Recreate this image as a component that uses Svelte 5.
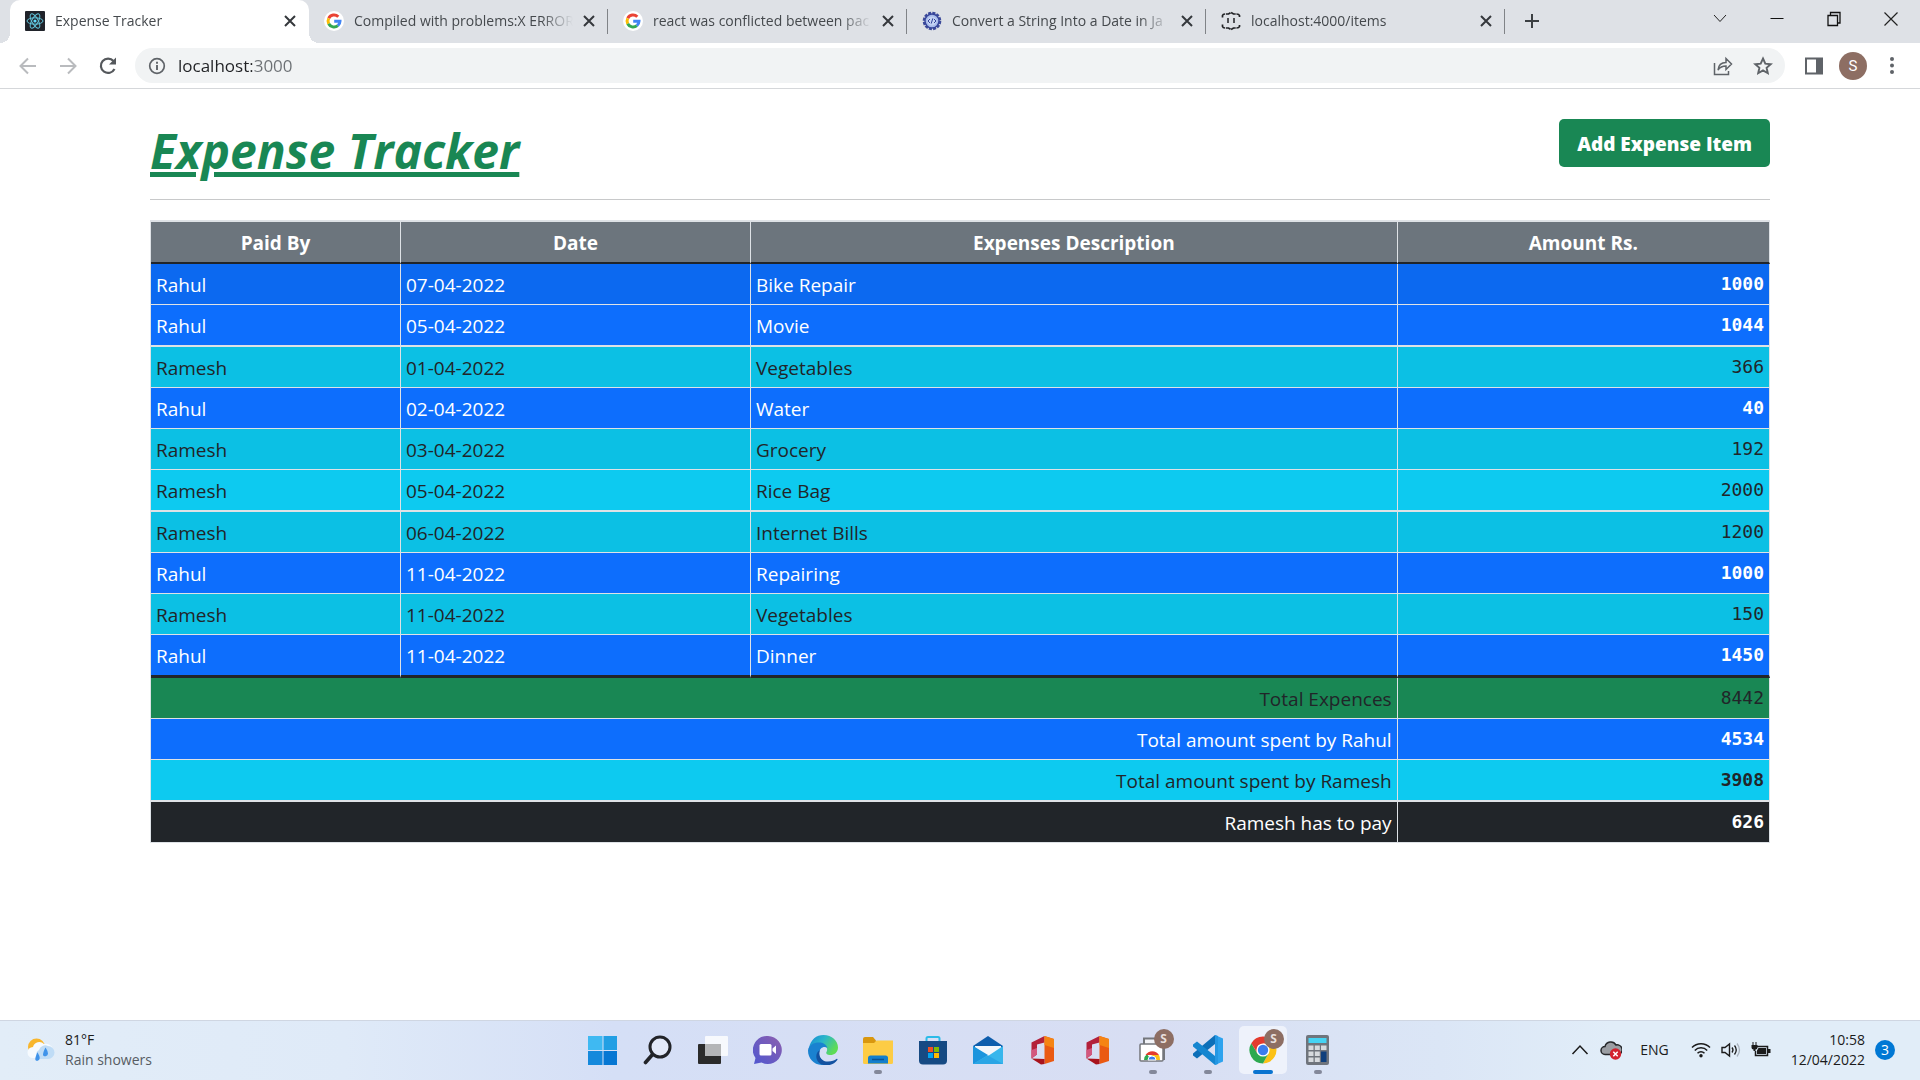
<script>
  const tabs = [
    { title: 'Expense Tracker', icon: 'react', active: true },
    { title: 'Compiled with problems:X ERROR', icon: 'google' },
    { title: 'react was conflicted between pac', icon: 'google' },
    { title: 'Convert a String Into a Date in Ja', icon: 'badge' },
    { title: 'localhost:4000/items', icon: 'json' }
  ];

  const expenses = [
    { payer: 'Rahul', date: '07-04-2022', description: 'Bike Repair', amount: 1000, shaded: true },
    { payer: 'Rahul', date: '05-04-2022', description: 'Movie', amount: 1044, thick: true },
    { payer: 'Ramesh', date: '01-04-2022', description: 'Vegetables', amount: 366, shaded: true },
    { payer: 'Rahul', date: '02-04-2022', description: 'Water', amount: 40 },
    { payer: 'Ramesh', date: '03-04-2022', description: 'Grocery', amount: 192, shaded: true },
    { payer: 'Ramesh', date: '05-04-2022', description: 'Rice Bag', amount: 2000, thick: true },
    { payer: 'Ramesh', date: '06-04-2022', description: 'Internet Bills', amount: 1200, shaded: true },
    { payer: 'Rahul', date: '11-04-2022', description: 'Repairing', amount: 1000 },
    { payer: 'Ramesh', date: '11-04-2022', description: 'Vegetables', amount: 150, shaded: true },
    { payer: 'Rahul', date: '11-04-2022', description: 'Dinner', amount: 1450 }
  ];

  const totals = [
    { label: 'Total Expences', amount: 8442, kind: 'success' },
    { label: 'Total amount spent by Rahul', amount: 4534, kind: 'primary', bold: true },
    { label: 'Total amount spent by Ramesh', amount: 3908, kind: 'info', bold: true, thick: true },
    { label: 'Ramesh has to pay', amount: 626, kind: 'dark', bold: true }
  ];

  const apps = [
    { name: 'Start', icon: 'start' },
    { name: 'Search', icon: 'search' },
    { name: 'Task View', icon: 'taskview' },
    { name: 'Chat', icon: 'chat' },
    { name: 'Microsoft Edge', icon: 'edge' },
    { name: 'File Explorer', icon: 'folder', running: true },
    { name: 'Microsoft Store', icon: 'store' },
    { name: 'Mail', icon: 'mail' },
    { name: 'Office', icon: 'office' },
    { name: 'Office', icon: 'office' },
    { name: 'Chrome Web Store', icon: 'webstore', running: true, profile: true },
    { name: 'Visual Studio Code', icon: 'vscode', running: true },
    { name: 'Google Chrome', icon: 'chrome', active: true, profile: true },
    { name: 'Calculator', icon: 'calc', running: true }
  ];

  let address = $state('localhost:3000');
</script>

{#snippet chromeLogo()}
  <path d="M15 8.500H26.800A13.500 13.500 0 0 1 15 28.500L20.600 18.300Z" fill="#fbc116" />
  <path d="M3.300 8.200 9.400 18.300 20.600 18.300 15 28.500A13.500 13.500 0 0 1 3.300 8.200Z" fill="#2da94f" />
  <path d="M3.300 8.200A13.500 13.500 0 0 1 26.800 8.500H15L9.400 18.300Z" fill="#e33b2e" />
  <circle cx="15" cy="15" r="6.600" fill="#fff" />
  <circle cx="15" cy="15" r="5.200" fill="#3b7ded" />
{/snippet}

{#snippet favicon(kind)}
  {#if kind === 'react'}
    <svg class="favicon" viewBox="0 0 20 20" aria-hidden="true">
      <rect width="20" height="20" rx="1" fill="#20232a" />
      <g fill="none" stroke="#61c5dc" stroke-width="1">
        <ellipse cx="10" cy="10" rx="8" ry="3.200" />
        <ellipse cx="10" cy="10" rx="8" ry="3.200" transform="rotate(60 10 10)" />
        <ellipse cx="10" cy="10" rx="8" ry="3.200" transform="rotate(120 10 10)" />
      </g>
      <circle cx="10" cy="10" r="1.600" fill="#61dafb" />
    </svg>
  {:else if kind === 'google'}
    <svg class="favicon" viewBox="0 0 20 20" aria-hidden="true">
      <circle cx="10" cy="10" r="10" fill="#fff" />
      <g fill="none" stroke-width="3">
        <path d="M14.300 5.800A6 6 0 0 0 4.700 7.300" stroke="#ea4335" />
        <path d="M4.700 7.300A6 6 0 0 0 4.700 12.700" stroke="#fbbc05" />
        <path d="M4.700 12.700A6 6 0 0 0 13.900 14.600" stroke="#34a853" />
        <path d="M13.900 14.600A6 6 0 0 0 16 10.200H10.200" stroke="#4285f4" />
      </g>
    </svg>
  {:else if kind === 'badge'}
    <svg class="favicon" viewBox="0 0 20 20" aria-hidden="true">
      <circle cx="10" cy="10" r="8" fill="none" stroke="#3c4a9a" stroke-width="2.600" stroke-dasharray="3 1.200" />
      <circle cx="10" cy="10" r="7" fill="#a8bbea" stroke="#35449a" stroke-width="1.400" />
      <circle cx="10" cy="10" r="4.600" fill="#c3d2f3" />
      <path d="M8 8 6 10l2 2M12 8l2 2-2 2M10.800 7.400 9.200 12.600" fill="none" stroke="#35449a" />
    </svg>
  {:else}
    <svg class="favicon" viewBox="0 0 20 20" aria-hidden="true">
      <path
        d="M1.500 6.500V4.500Q2 3 4.500 3H7.500L10 1.500 12.500 3H15.500Q18 3 18.500 4.500V6.500M1.500 13.500V15.500Q2 17 4.500 17H7.500L10 18.500 12.500 17H15.500Q18 17 18.500 15.500V13.500"
        fill="none" stroke="#202124" stroke-width="1.700" stroke-dasharray="5 0.700" />
      <path d="M7 7v5M13 7v5" stroke="#202124" stroke-width="1.500" />
    </svg>
  {/if}
{/snippet}

{#snippet appIcon(kind)}
  <svg class="app-icon" viewBox="0 0 30 30" aria-hidden="true">
    {#if kind === 'start'}
      <path d="M0 1h14.500v14H0z" fill="#3fb9f2" />
      <path d="M15.500 1H29v14H15.500z" fill="#229fe4" />
      <path d="M0 16h14.500v14H0z" fill="#1589dc" />
      <path d="M15.500 16H29v14H15.500z" fill="#0677d3" />
    {:else if kind === 'search'}
      <circle cx="17" cy="12" r="10" fill="#e3e9f8" stroke="#222428" stroke-width="3" />
      <path d="M9.500 19.500 2.500 27.500" stroke="#222428" stroke-width="3.600" stroke-linecap="round" />
    {:else if kind === 'taskview'}
      <rect x="0" y="9" width="23" height="20" rx="1" fill="#2b2b2b" />
      <rect x="7" y="1" width="23" height="20" rx="1" fill="#fff" opacity="0.800" />
      <path d="M7 9h16v12H7z" fill="#b4b5b7" />
    {:else if kind === 'chat'}
      <path d="M15 1a14 14 0 1 1-6.500 26.500L1 29l1.500-6A14 14 0 0 1 15 1Z" fill="url(#chatFill)" />
      <rect x="6.500" y="9" width="12" height="11.500" rx="1.500" fill="#fff" />
      <path d="m19.500 13.500 3.500-3v8.500l-3.500-3z" fill="#fff" />
    {:else if kind === 'edge'}
      <path d="M1 13C2.500 4.500 8.500 0 15.500 0 24 0 30 6 30 12.500c0 5-4 7.500-7.500 7.500-3.500 0-5-1.500-4-3 2-3.500-.5-7-5-7C7.500 10 2 11 1 18Z" fill="url(#edgeTop)" />
      <path d="M0 15.500C.500 10 6 7.500 11 7.500c4 0 7.500 2 8.500 5.500-2-1.500-4.500-1.500-6.500.5-3 3-2.500 9.500 2 13 2 1.800 4.500 2.500 6 2.300C10 33 0 26 0 15.500Z" fill="#1a82d0" />
      <path d="M12 15c-2 5 .500 11.500 8 11.500 4 0 6.500-1 8.500-2.500.8-.5 1.300.2.800 1C26.500 29 22 31 16 30 8 28.500 5.500 19 12 15Z" fill="#1352a1" />
    {:else if kind === 'folder'}
      <path d="M0 4q0-2 2-2h8l3 3.500V9H0z" fill="#d9970f" />
      <path d="M0 8h11l2.500-2.500H30v22q0 1.500-1.500 1.500h-27Q0 29 0 27.500z" fill="#fdcc45" />
      <path d="M5 28.500V23q0-2.500 2.500-2.500h15Q25 20.500 25 23v5.500z" fill="#137fcd" />
      <path d="M9 24.500h12" stroke="#0b5292" stroke-width="1.500" />
    {:else if kind === 'store'}
      <path d="M8.500 7V3.500q0-1.500 1.500-1.500h10q1.500 0 1.500 1.500V7" fill="none" stroke="#2bbbe8" stroke-width="2" />
      <path d="M1 6h28v19.500q0 4-4 4H5q-4 0-4-4z" fill="#164a83" />
      <path d="M10 12h5v5h-5z" fill="#f25022" /><path d="M16 12h5v5h-5z" fill="#7fba00" />
      <path d="M10 18h5v5h-5z" fill="#00a4ef" /><path d="M16 18h5v5h-5z" fill="#ffb900" />
    {:else if kind === 'mail'}
      <path d="M0 11 15 1l15 10v6H0z" fill="#0e5dac" />
      <path d="M2 11h26v9H2z" fill="#f3f6fb" />
      <path d="M0 11 15 21 30 11v18H0z" fill="#38b6ec" />
      <path d="M0 29 15 20 0 11z" fill="#1c94dd" /><path d="m15 20.500 15 8.500H0z" fill="#2aa5e5" />
    {:else if kind === 'office'}
      <path d="M3.500 7.500 16.500 1v6.500L9 9.500v10l-5.500 4z" fill="#b3203a" />
      <path d="m16.500 1 9.500 3v22l-9.500 3z" fill="#ea5a12" />
      <path d="m16.500 1 9.500 3v9l-9.500-3z" fill="#f58413" />
      <path d="m3.500 23.500 13 .5V29L13 29.500z" fill="#a8131c" />
      <path d="m3.500 23.500 5.500-4V13l-5.500 2z" fill="#d3577e" />
    {:else if kind === 'webstore'}
      <path d="M6 9V3.500h20V24h-3" fill="#f2f3f7" stroke="#74777c" stroke-width="2" />
      <rect x="2" y="9" width="23" height="17" rx="1" fill="#fff" stroke="#74777c" stroke-width="1.500" />
      <path d="M6 25a8 8 0 0 1 3-6l4 6z" fill="#2da94f" />
      <path d="M7.500 20a8 8 0 0 1 13.500 0h-8z" fill="#e33b2e" />
      <path d="M13.500 20h7.500q1 2 1 5h-7z" fill="#fbc116" />
      <path d="M10 25a4 4 0 0 1 8 0z" fill="#3b7ded" stroke="#fff" />
    {:else if kind === 'vscode'}
      <path d="m22 0 8 3.500v23L22 30z" fill="#2ea3ee" />
      <path d="M22 0v9L4 23.500 0 20.500v-2z" fill="#0d6fb8" />
      <path d="M22 30v-9L4 6.500 0 9.500v2z" fill="#1586d0" />
      <path d="m22 0 3 1v28l-3 1z" fill="#2497e3" />
    {:else if kind === 'chrome'}
      {@render chromeLogo()}
    {:else}
      <rect x="3" y="0" width="23" height="30" rx="2" fill="#6f747c" />
      <rect x="5.500" y="3" width="18" height="5" fill="#46d3f3" />
      <path d="M5.500 10.500h5v4.500h-5zM11.800 10.500h5v4.500h-5zM18 10.500h5.500v4.500H18zM5.500 16.500h5V21h-5zM11.800 16.500h5V21h-5zM5.500 22.500h5V27h-5zM11.800 22.500h5V27h-5z" fill="#d7dade" />
      <path d="M18 16.500h5.500V27H18z" fill="#103f7c" />
    {/if}
  </svg>
{/snippet}

<svg class="defs" aria-hidden="true">
  <defs>
    <linearGradient id="chatFill" x1="1" y1="0" x2="0" y2="1">
      <stop offset="0" stop-color="#8d5fae" /><stop offset="1" stop-color="#4f57d0" />
    </linearGradient>
    <linearGradient id="edgeTop" x1="0" y1="0" x2="1" y2="0.500">
      <stop offset="0" stop-color="#1487d8" /><stop offset="0.500" stop-color="#2bb6c9" /><stop offset="1" stop-color="#5fdc55" />
    </linearGradient>
  </defs>
</svg>

<div class="screen">
  <header class="browser">
    <div class="tab-strip">
      <nav class="tabs" aria-label="Tabs">
        {#each tabs as tab}
          <div class="tab" class:active={tab.active}>
            {@render favicon(tab.icon)}
            <span class="tab-title">{tab.title}</span>
            <button class="icon-button" aria-label="Close tab">
              <svg width="12" height="12" viewBox="0 0 12 12"><path d="m1 1 10 10M11 1 1 11" stroke="#35383c" stroke-width="2" /></svg>
            </button>
          </div>
        {/each}
        <button class="icon-button new-tab" aria-label="New tab">
          <svg width="16" height="16" viewBox="0 0 16 16"><path d="M8 1v14M1 8h14" stroke="#3c4043" stroke-width="2" /></svg>
        </button>
      </nav>
      <div class="window-controls">
        <button class="icon-button" aria-label="Search tabs">
          <svg width="16" height="16" viewBox="0 0 16 16"><path d="m2 4 6 6.500L14 4" fill="none" stroke="#222" /></svg>
        </button>
        <button class="icon-button" aria-label="Minimize">
          <svg width="16" height="16" viewBox="0 0 16 16"><path d="M1.500 7.500h13" stroke="#111" /></svg>
        </button>
        <button class="icon-button" aria-label="Restore">
          <svg width="16" height="16" viewBox="0 0 16 16"><path d="M2 4.500h9.500v10H2zM4.500 4V1.500H14V12h-2" fill="none" stroke="#111" stroke-width="1.300" /></svg>
        </button>
        <button class="icon-button" aria-label="Close">
          <svg width="16" height="16" viewBox="0 0 16 16"><path d="m1.500 1.500 13 13M14.500 1.500l-13 13" stroke="#222" stroke-width="1.200" /></svg>
        </button>
      </div>
    </div>

    <div class="toolbar">
      <button class="icon-button nav-button" aria-label="Back">
        <svg width="20" height="20" viewBox="0 0 20 20"><path d="M18 10H3M10 2.500 2.500 10l7.500 7.500" fill="none" stroke="#b9bbbe" stroke-width="2" /></svg>
      </button>
      <button class="icon-button nav-button" aria-label="Forward">
        <svg width="20" height="20" viewBox="0 0 20 20"><path d="M2 10h15M10 2.500l7.500 7.500-7.500 7.500" fill="none" stroke="#b9bbbe" stroke-width="2" /></svg>
      </button>
      <button class="icon-button nav-button" aria-label="Reload">
        <svg width="20" height="20" viewBox="0 0 20 20"><path d="M16.500 13A7.200 7.200 0 1 1 15.500 5" fill="none" stroke="#55585c" stroke-width="2.200" /><path d="M18 1.500V8.500H11z" fill="#55585c" /></svg>
      </button>
      <div class="omnibox">
        <svg width="18" height="18" viewBox="0 0 18 18" aria-hidden="true">
          <circle cx="9" cy="9" r="7.300" fill="none" stroke="#5f6368" stroke-width="1.700" />
          <path d="M9 8v5M9 4.800v1.900" stroke="#5f6368" stroke-width="1.900" />
        </svg>
        <input class="address" type="text" aria-label="Address" bind:value={address} />
        <button class="icon-button" aria-label="Share">
          <svg width="20" height="20" viewBox="0 0 20 20"><path d="M1.500 7v11.500h14V15" fill="none" stroke="#5f6368" stroke-width="1.500" /><path d="M5 14c.5-5 3-7.500 8-7.500V2.500l5.500 5.500-5.500 5.500V10C9 10 7 11 5 14Z" fill="none" stroke="#5f6368" stroke-width="1.500" /></svg>
        </button>
        <button class="icon-button" aria-label="Bookmark">
          <svg width="20" height="20" viewBox="0 0 20 20"><path d="m10 2.500 2.300 5.200 5.400.500-4.100 3.600 1.200 5.400L10 14.400l-4.800 2.800 1.200-5.400-4.100-3.600 5.400-.500z" fill="none" stroke="#5f6368" stroke-width="1.900" /></svg>
        </button>
      </div>
      <div class="toolbar-end">
        <button class="icon-button" aria-label="Side panel">
          <svg width="18" height="18" viewBox="0 0 18 18"><path d="M1 1.500h16v15H1z" fill="#fff" stroke="#5f6368" stroke-width="2" /><path d="M11 1h6v16h-6z" fill="#5f6368" /></svg>
        </button>
        <button class="avatar" aria-label="Profile">S</button>
        <button class="icon-button" aria-label="Menu">
          <svg width="18" height="18" viewBox="0 0 18 18"><g fill="#5f6368"><circle cx="9" cy="2" r="2" /><circle cx="9" cy="8.500" r="2" /><circle cx="9" cy="15" r="2" /></g></svg>
        </button>
      </div>
    </div>
  </header>

  <main class="page">
    <div class="page-head">
      <h1>Expense Tracker</h1>
      <button class="add">Add Expense Item</button>
    </div>
    <hr />
    <table>
      <colgroup>
        <col class="col-payer" /><col class="col-date" /><col class="col-description" /><col class="col-amount" />
      </colgroup>
      <thead>
        <tr>
          <th scope="col">Paid By</th>
          <th scope="col">Date</th>
          <th scope="col">Expenses Description</th>
          <th scope="col">Amount Rs.</th>
        </tr>
      </thead>
      <tbody>
        {#each expenses as item}
          <tr class={item.payer === 'Rahul' ? 'primary' : 'info'} class:shaded={item.shaded} class:thick={item.thick}>
            <td>{item.payer}</td>
            <td>{item.date}</td>
            <td>{item.description}</td>
            <td class="amount" class:bold={item.payer === 'Rahul'}>{item.amount}</td>
          </tr>
        {/each}
      </tbody>
      <tfoot>
        {#each totals as total}
          <tr class={total.kind} class:thick={total.thick}>
            <td class="label" colspan="3">{total.label}</td>
            <td class="amount" class:bold={total.bold}>{total.amount}</td>
          </tr>
        {/each}
      </tfoot>
    </table>
  </main>

  <footer class="taskbar">
    <button class="weather">
      <svg width="28" height="26" viewBox="0 0 28 26" aria-hidden="true">
        <circle cx="9.500" cy="10" r="8.500" fill="#f8b62d" />
        <path d="M6 21a5.500 5.500 0 0 1 0-11 6.500 6.500 0 0 1 11-3 7 7 0 0 1 4 14z" fill="#f6fafe" />
        <path d="M12 22a5 5 0 0 1 0-9 6.500 6.500 0 0 1 9-4 6.500 6.500 0 0 1 0 13z" fill="#bfdcf6" />
        <path d="M10.500 17q3 5 0 6t0-6ZM18.500 12q3.500 5.500 0 6.500t0-6.500Z" fill="#3f93ea" stroke="#3f93ea" stroke-width="1.500" />
      </svg>
      <span class="weather-text"><span class="temp">81°F</span><span class="sky">Rain showers</span></span>
    </button>

    <nav class="apps" aria-label="Taskbar apps">
      {#each apps as app}
        <button class="app" class:active={app.active} class:running={app.running} aria-label={app.name}>
          {@render appIcon(app.icon)}
          {#if app.profile}<span class="profile">S</span>{/if}
        </button>
      {/each}
    </nav>

    <div class="tray">
      <button class="icon-button chevron" aria-label="Hidden icons">
        <svg width="18" height="12" viewBox="0 0 18 12"><path d="m1.500 10 7.500-8 7.500 8" fill="none" stroke="#1b1b1b" stroke-width="1.500" /></svg>
      </button>
      <svg width="22" height="20" viewBox="0 0 22 20" aria-hidden="true">
        <path d="M5 14.500a4 4 0 0 1 0-8 6 6 0 0 1 11-1.500 5 5 0 0 1 3 9.500z" fill="#9a9da2" stroke="#25272a" stroke-width="1.500" />
        <circle cx="15.500" cy="14" r="5.700" fill="#d3222e" />
        <path d="m13.300 11.800 4.400 4.400M17.700 11.800l-4.400 4.400" stroke="#fff" stroke-width="1.500" />
      </svg>
      <span class="language">ENG</span>
      <button class="quick" aria-label="Network, volume and battery">
        <svg width="20" height="16" viewBox="0 0 20 16"><g fill="none" stroke="#1b1b1b" stroke-width="1.500"><path d="M1 5.500a12.500 12.500 0 0 1 18 0" /><path d="M3.800 8.500a8.500 8.500 0 0 1 12.400 0" /><path d="M6.500 11.300a5 5 0 0 1 7 0" /></g><circle cx="10" cy="13.800" r="1.700" fill="#1b1b1b" /></svg>
        <svg width="20" height="16" viewBox="0 0 20 16"><path d="M1 5.500h3L8.500 2v12L4 10.500H1z" fill="none" stroke="#1b1b1b" stroke-width="1.400" /><path d="M11 5.500q2 2.500 0 5M13.500 3.500q3.500 4.500 0 9" fill="none" stroke="#1b1b1b" stroke-width="1.300" /><path d="M16 1.500q5 6.500 0 13" fill="none" stroke="#a9b2bd" stroke-width="1.300" /></svg>
        <svg width="20" height="16" viewBox="0 0 20 16"><path d="M6 4.500h10.500v9H4.500V9" fill="none" stroke="#1b1b1b" stroke-width="1.500" /><path d="M7.500 6h7.500v6H6V8.500zM17 7h2.500v4H17zM.5 3h6v2.500q0 2-2 2V9h-2V7.500q-2 0-2-2zM1.500 0h1v3h-1zM4.500 0h1v3h-1z" fill="#1b1b1b" /></svg>
      </button>
      <span class="clock"><span>10:58</span><span>12/04/2022</span></span>
      <span class="notifications">3</span>
    </div>
  </footer>
</div>

<style>
  :global(body) {
    margin: 0;
    background: #fff;
  }

  .screen,
  .screen * {
    box-sizing: border-box;
  }

  .screen {
    display: flex;
    flex-direction: column;
    min-height: 100vh;
    font-family: 'Open Sans', 'Noto Sans', sans-serif;
    font-size: 19px;
    line-height: 30px;
    color: #212529;
  }

  .defs {
    position: absolute;
    width: 0;
    height: 0;
  }

  button,
  input {
    font: inherit;
    color: inherit;
    border: 0;
    padding: 0;
    background: none;
  }

  svg {
    display: block;
    flex: none;
  }

  .icon-button {
    display: flex;
    align-items: center;
    justify-content: center;
    flex: none;
  }

  /* Browser chrome */
  .tab-strip {
    display: flex;
    justify-content: space-between;
    height: 43px;
    background: #dee1e6;
  }

  .tabs {
    display: flex;
    flex: 1;
    min-width: 0;
    padding-left: 10px;
  }

  .tab {
    position: relative;
    display: flex;
    align-items: center;
    flex: 0 1 299px;
    min-width: 0;
    gap: 10px;
    padding: 0 13px 2px 15px;
    font-size: 14px;
    line-height: 20px;
    color: #45494d;
  }

  .tab:not(.active)::after {
    content: '';
    position: absolute;
    right: 0;
    top: 9px;
    width: 1px;
    height: 25px;
    background: #808387;
  }

  .tab.active {
    background: #fff;
    border-radius: 10px 10px 0 0;
  }

  .tab.active::before,
  .tab.active::after {
    content: '';
    position: absolute;
    bottom: 0;
    width: 10px;
    height: 10px;
  }

  .tab.active::before {
    right: 100%;
    background: radial-gradient(circle at 0 0, transparent 10px, #fff 10px);
  }

  .tab.active::after {
    left: 100%;
    background: radial-gradient(circle at 100% 0, transparent 10px, #fff 10px);
  }

  .favicon {
    width: 20px;
    height: 20px;
  }

  .tab-title {
    flex: 1;
    min-width: 0;
    overflow: hidden;
    white-space: nowrap;
    mask-image: linear-gradient(90deg, #000 calc(100% - 32px), transparent);
  }

  .new-tab {
    width: 53px;
    padding-bottom: 2px;
  }

  .window-controls {
    display: flex;
    height: 38px;
    padding-right: 1px;
  }

  .window-controls .icon-button {
    width: 57px;
  }

  .toolbar {
    display: flex;
    align-items: center;
    height: 46px;
    padding: 0 8px;
    background: #fff;
    border-bottom: 1px solid #d5d7da;
  }

  .nav-button {
    width: 40px;
    height: 36px;
  }

  .omnibox {
    display: flex;
    align-items: center;
    flex: 1;
    height: 35px;
    margin-left: 7px;
    padding: 0 12px 0 13px;
    border-radius: 18px;
    background: #f1f3f4;
    gap: 20px;
  }

  .address {
    flex: 1;
    min-width: 0;
    margin-left: -8px;
    font-size: 17px;
    line-height: 24px;
    outline: 0;
    background: linear-gradient(90deg, #202124 74px, #6c7074 74px);
    background-clip: text;
    color: transparent;
  }

  .toolbar-end {
    display: flex;
    align-items: center;
    gap: 16px;
    padding: 0 11px 0 20px;
  }

  .avatar {
    width: 28px;
    height: 28px;
    border-radius: 50%;
    background: #8d6e63;
    color: #fff;
    font-family: Roboto, sans-serif;
    font-size: 15px;
    line-height: 28px;
  }

  /* Page */
  .page {
    flex: 1;
    width: 100%;
    max-width: 1650px;
    margin: 0 auto;
    padding: 30px 15px;
  }

  .page-head {
    display: flex;
    justify-content: space-between;
    align-items: flex-start;
  }

  h1 {
    margin: 0;
    font-size: 48px;
    line-height: 64px;
    font-weight: 700;
    font-style: italic;
    text-decoration: underline 5px;
    text-underline-offset: 3px;
    color: #198754;
  }

  .add {
    padding: 10px 18px 8px;
    border-radius: 5px;
    background: #198754;
    color: #fff;
    font-weight: 800;
  }

  hr {
    height: 1px;
    margin: 16px 0 20px;
    border: 0;
    background: #c8c9ca;
  }

  table {
    width: 100%;
    table-layout: fixed;
    border-collapse: separate;
    border-spacing: 0;
    border-top: 2px solid #dee2e6;
    border-left: 1px solid #dee2e6;
  }

  .col-payer {
    width: 250px;
  }

  .col-date {
    width: 350px;
  }

  .col-amount {
    width: 23%;
  }

  th,
  td {
    height: 41px;
    padding: 6px 5px 4px;
    border-right: 1px solid #dee2e6;
    border-bottom: 1px solid #dee2e6;
    text-align: left;
    vertical-align: middle;
  }

  th {
    height: 42px;
    background: #6c757d;
    color: #fff;
    text-align: center;
    border-bottom: 2px solid #212529;
  }

  .thick td {
    height: 42px;
    border-bottom-width: 2px;
  }

  tbody tr:last-child td {
    height: 43px;
    border-bottom: 3px solid #212529;
  }

  .primary td {
    background: #0d6efd;
    color: #fff;
  }

  .primary.shaded td {
    background: #0c69f0;
  }

  .info td {
    background: #0dcaf0;
  }

  .info.shaded td {
    background: #0cc0e4;
  }

  .success td {
    background: #198754;
  }

  .dark td {
    background: #212529;
    color: #fff;
  }

  td.label {
    text-align: right;
  }

  td.amount {
    padding-top: 2px;
    padding-bottom: 2px;
    text-align: right;
    font-family: 'DejaVu Sans Mono', monospace;
    font-size: 18px;
  }

  .bold {
    font-weight: 700;
  }

  /* Taskbar */
  .taskbar {
    display: grid;
    grid-template-columns: 1fr auto 1fr;
    align-items: center;
    height: 60px;
    font-size: 14px;
    line-height: 20px;
    color: #1b1b1b;
    box-shadow: inset 0 1px #cfd6e2;
    background: linear-gradient(90deg, #e2edf8 0%, #dfeaf8 18%, #d5dff6 32%, #d8def3 60%, #dbe6f6 75%, #e1edf8 84%);
  }

  .weather {
    display: flex;
    align-items: center;
    justify-self: start;
    gap: 10px;
    padding-left: 27px;
    text-align: left;
  }

  .weather-text,
  .clock {
    display: flex;
    flex-direction: column;
  }

  .sky {
    color: #575c63;
  }

  .apps {
    display: flex;
    gap: 7px;
  }

  .app {
    position: relative;
    display: flex;
    align-items: center;
    justify-content: center;
    width: 48px;
    height: 48px;
    border-radius: 5px;
  }

  .app.active {
    background: #eef2fb;
  }

  .app-icon {
    width: 30px;
    height: 30px;
  }

  .app.running::after,
  .app.active::after {
    content: '';
    position: absolute;
    bottom: 0;
    width: 8px;
    height: 4px;
    border-radius: 2px;
    background: #83889a;
  }

  .app.active::after {
    width: 20px;
    background: #0a74d0;
  }

  .profile {
    position: absolute;
    top: 3px;
    right: 3px;
    width: 20px;
    height: 20px;
    border-radius: 50%;
    background: #8d6e63;
    color: #e8dfdc;
    font-size: 12px;
    font-weight: 700;
  }

  .tray {
    display: flex;
    align-items: center;
    justify-self: end;
    padding-right: 25px;
  }

  .chevron {
    margin-right: 11px;
  }

  .language {
    margin: 0 22px 0 18px;
  }

  .quick {
    display: flex;
    gap: 10px;
    margin-right: 20px;
  }

  .clock {
    text-align: right;
  }

  .notifications {
    width: 20px;
    height: 20px;
    margin-left: 10px;
    border-radius: 50%;
    background: #0078d4;
    color: #fff;
    font-size: 14px;
    text-align: center;
  }
</style>
